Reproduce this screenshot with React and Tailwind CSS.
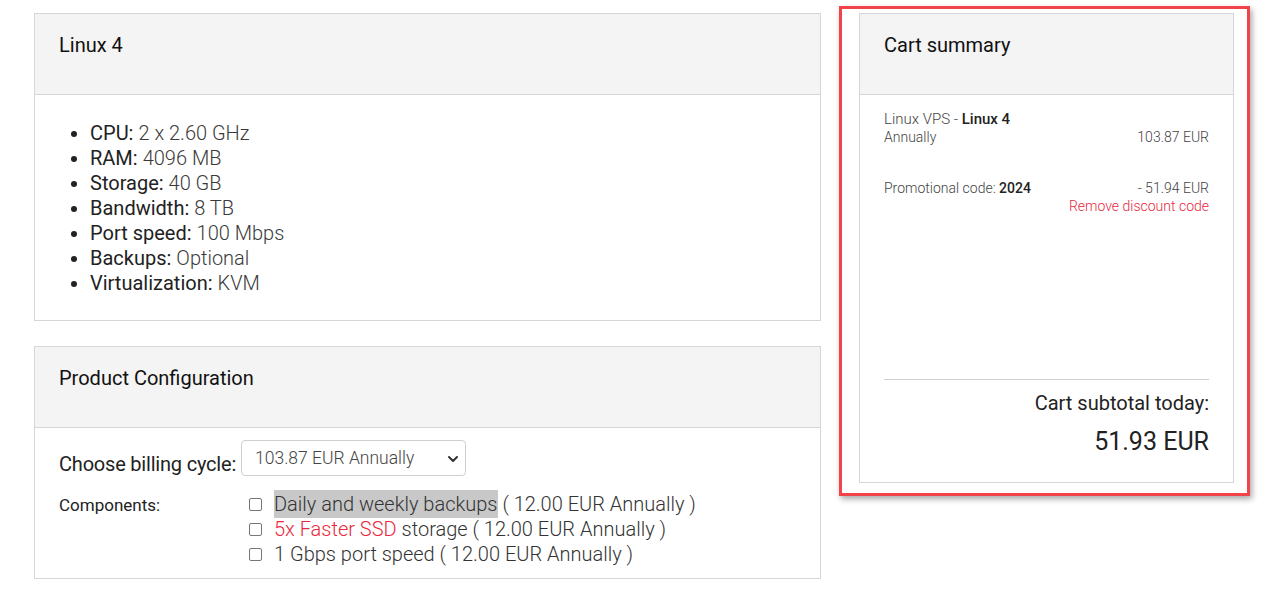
import React from "react";

const font = { fontFamily: "Roboto, 'Liberation Sans', sans-serif" };

function Card({ title, children, className = "" }) {
  return (
    <div className={"border border-[#d6d6d6] bg-white " + className}>
      <div className="h-[81px] border-b border-[#d6d6d6] bg-[#f4f4f4] px-[24px] pt-[19px]">
        <h4 className="text-[20px] leading-[24px] font-normal text-[#111]">{title}</h4>
      </div>
      {children}
    </div>
  );
}

const specs = [
  ["CPU:", "2 x 2.60 GHz"],
  ["RAM:", "4096 MB"],
  ["Storage:", "40 GB"],
  ["Bandwidth:", "8 TB"],
  ["Port speed:", "100 Mbps"],
  ["Backups:", "Optional"],
  ["Virtualization:", "KVM"],
];

function Check() {
  return (
    <span className="w-[13px] h-[13px] shrink-0 rounded-[2px] border border-[#767676] bg-white" />
  );
}

export default function App() {
  return (
    <div className="min-h-[595px] bg-white" style={font}>
      <div className="flex items-start gap-[18px] pl-[34px]">
        <div className="mt-[13px] w-[787px] shrink-0">
          <Card title="Linux 4">
            <ul className="list-disc pl-[55px] pt-[26px] pb-[24px] text-[20px] leading-[25px] text-[#222] marker:text-[#222]">
              {specs.map(([k, v]) => (
                <li key={k}>
                  <span className="font-normal">{k}</span>{" "}
                  <span className="font-light text-[#3a3a3a]">{v}</span>
                </li>
              ))}
            </ul>
          </Card>

          <Card title="Product Configuration" className="mt-[25px]">
            <div className="px-[24px] pt-[12px] pb-[11px]">
              <div className="flex items-start gap-[5px]">
                <span className="mt-[12px] text-[20px] leading-[24px] text-[#222] tracking-[-0.2px]">Choose billing cycle:</span>
                <div className="relative flex h-[36px] w-[225px] items-center rounded-[4px] border border-[#cfcfcf] bg-white pl-[13px]">
                  <span className="text-[17.5px] font-light text-[#444]">103.87 EUR Annually</span>
                  <svg className="absolute right-[6px] top-[13px]" width="12" height="10" viewBox="0 0 12 10">
                    <path d="M2 3 L6 7 L10 3" fill="none" stroke="#333" strokeWidth="2" strokeLinecap="round" strokeLinejoin="round" />
                  </svg>
                </div>
              </div>
              <div className="mt-[16px] flex">
                <div className="w-[190px] shrink-0 pt-[1px] text-[17px] leading-[25px] text-[#222]">Components:</div>
                <div className="flex flex-col text-[20px] leading-[25px] font-light text-[#333]">
                  <div className="flex items-center gap-[12px]">
                    <Check />
                    <span>
                      <span className="bg-[#c8c8c8] py-[2px]">Daily and weekly backups</span> ( 12.00 EUR Annually )
                    </span>
                  </div>
                  <div className="flex items-center gap-[12px]">
                    <Check />
                    <span>
                      <span className="text-[#e8283c]">5x Faster SSD</span> storage ( 12.00 EUR Annually )
                    </span>
                  </div>
                  <div className="flex items-center gap-[12px]">
                    <Check />
                    <span>1 Gbps port speed ( 12.00 EUR Annually )</span>
                  </div>
                </div>
              </div>
            </div>
          </Card>
        </div>

        <div className="mt-[6px] w-[411px] shrink-0 border-[3px] border-[#f2434a] pt-[4px] pl-[17px] pr-[13px] pb-[10px] shadow-[2px_3px_6px_rgba(0,0,0,0.35)]">
          <Card title="Cart summary">
            <div className="px-[24px]">
              <div className="h-[284px] pt-[15px] text-[14px] leading-[18px] font-light text-[#444]">
                <div className="text-[15px]">
                  Linux VPS - <span className="font-medium text-[#222]">Linux 4</span>
                </div>
                <div className="flex justify-between">
                  <span>Annually</span>
                  <span>103.87 EUR</span>
                </div>
                <div className="mt-[33px] flex justify-between">
                  <span>
                    Promotional code: <span className="font-medium text-[#222]">2024</span>
                  </span>
                  <div className="flex flex-col items-end">
                    <span>- 51.94 EUR</span>
                    <span className="text-[#e8283c]">Remove discount code</span>
                  </div>
                </div>
              </div>
              <div className="border-t border-[#cfcfcf] pt-[11px] pb-[25px] text-right text-[#222]">
                <div className="text-[20px] leading-[24px]">Cart subtotal today:</div>
                <div className="mt-[12px] text-[25px] leading-[30px]">51.93 EUR</div>
              </div>
            </div>
          </Card>
        </div>
      </div>
    </div>
  );
}
